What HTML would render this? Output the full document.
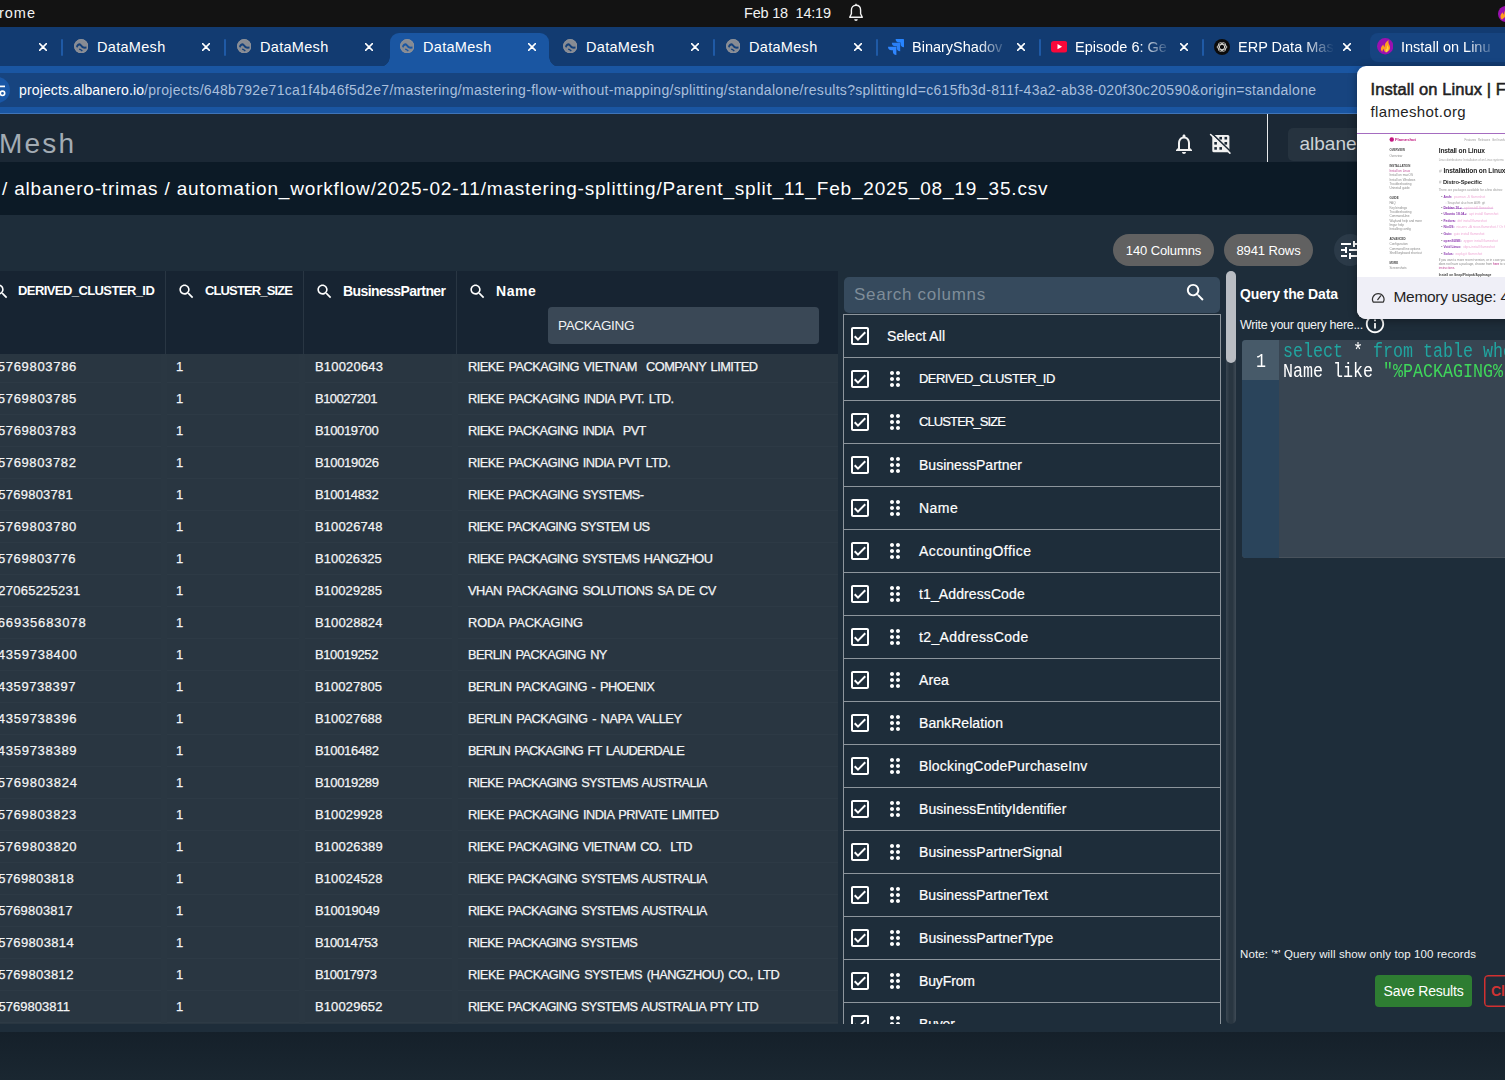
<!DOCTYPE html>
<html lang="en"><head><meta charset="utf-8"><title>DataMesh</title>
<style>
*{box-sizing:border-box}
html,body{margin:0;padding:0}
body{width:1505px;height:1080px;overflow:hidden;position:relative;background:#1e2d3a;font-family:"Liberation Sans",sans-serif;color:#fff}
.abs,.ic{position:absolute}
.ic{display:block}
span{white-space:nowrap}
/* system bar */
#sys{position:absolute;left:0;top:0;width:1505px;height:27px;background:#131313}
#sys span{position:absolute;top:3.700px;font-size:14.500px;line-height:19px;color:#f2f2f2}
/* tab strip */
#tabs{position:absolute;left:0;top:27px;width:1505px;height:40px;background:#123b71}
#toolbar{position:absolute;left:0;top:66px;width:1505px;height:48px;background:#1a56a2;border-bottom:1px solid #3f74b8}
#omni{position:absolute;left:-20px;top:7px;width:1400px;height:34px;border-radius:17px;background:#17447f}
#omni span{position:absolute;top:7px;font-size:14px;line-height:20px;font-family:"Liberation Sans",sans-serif}
.tab{position:absolute;top:6px;height:34px}
.tab .tt{position:absolute;top:5px;font-size:14.5px;line-height:18px;color:#fff;font-family:"Liberation Sans",sans-serif;overflow:hidden}
.tab .x{position:absolute;top:4px;font-size:15px;line-height:20px;color:#fff;font-family:"DejaVu Sans",sans-serif}
.tsep{position:absolute;top:11.500px;width:2px;height:17px;background:#1f5aa6;border-radius:1px}
#acttab{position:absolute;left:390px;top:6px;width:159px;height:34px;background:#1a56a2;border-radius:9px 9px 0 0}
#acttab:before,#acttab:after{content:"";position:absolute;bottom:0;width:10px;height:10px;background:radial-gradient(circle at 0 0,transparent 9.5px,#1a56a2 10px)}
#acttab:before{left:-10px}
#acttab:after{right:-10px;background:radial-gradient(circle at 100% 0,transparent 9.5px,#1a56a2 10px)}
/* app header */
#apphdr{position:absolute;left:0;top:114px;width:1505px;height:48px;background:#1b2835}
#brand{position:absolute;left:-1px;top:12px;font-size:28px;line-height:36px;color:#a3acb4;font-weight:400}
#hdiv{position:absolute;left:1267px;top:0;width:1px;height:48px;background:#e8eaec}
#proj{position:absolute;left:1288px;top:14px;width:120px;height:33px;border-radius:5px;background:#26333f}
#proj span{position:absolute;left:11.500px;top:4.500px;font-size:19px;line-height:22px;color:#cdd2d7}
#crumb{position:absolute;left:0;top:162px;width:1505px;height:53px;background:#0c1a26}
#crumb span{position:absolute;left:2px;top:15px;font-size:19px;line-height:24px;color:#fff;letter-spacing:0.1px}
#foot{position:absolute;left:0;top:1032px;width:1505px;height:48px;background:linear-gradient(#15202a,#1a2731)}
/* chips */
.chip{position:absolute;top:234px;height:32px;border-radius:16px;background:#616161;color:#fff;font-size:13px;line-height:34px;text-align:center}
#tunebtn{position:absolute;left:1334px;top:234px;width:32px;height:32px;border-radius:16px;background:#2b3a48}
/* table */
#table{position:absolute;left:0;top:271px;width:838px;height:753px;overflow:hidden;background:#293641}
#thead{position:absolute;left:0;top:0;width:838px;height:83px;background:#172432;z-index:2}

.th{position:absolute;top:10px;font-size:14px;line-height:20px;font-weight:bold;color:#fff}
.vsep{position:absolute;top:0;width:1px;height:83px;background:#293643}
.vband{position:absolute;top:83px;width:6px;height:680px;background:#2a3742;z-index:1}
#filter{position:absolute;left:548px;top:36px;width:271px;height:37px;border-radius:4px;background:#3a4856}
#filter span{position:absolute;left:10px;top:9px;font-size:13.5px;line-height:20px;color:#f1f3f4}
.tr{position:absolute;left:0;width:838px;height:32px;border-bottom:1px solid #2d3a45;font-size:13px;line-height:20px;color:#f3f4f5}
.tr span{position:absolute;top:5.500px;z-index:2;-webkit-text-stroke:.250px #f3f4f5}
.c3{font-size:12.800px;word-spacing:1.500px}
.c0{right:759px}
.c1{left:176px}
.c2{left:315px}
.c3{left:468px}
/* col list */
#colsearch{position:absolute;left:844px;top:277px;width:376px;height:35.500px;background:#364a5d;border-radius:5px}
#colsearch span{position:absolute;left:10px;top:7px;font-size:17px;line-height:22px;color:#7f8d99}
#collist{position:absolute;left:843px;top:314px;width:378px;height:710px;overflow:hidden;border-left:1px solid #8d959c;border-right:1px solid #8d959c}
.cl{position:absolute;left:0;width:376px;height:43px;border-top:1px solid #8d959c}
.cn{position:absolute;top:11px;font-size:14px;line-height:20px;color:#fff;-webkit-text-stroke:.200px #fff}
#sbtrack{position:absolute;left:1226px;top:271px;width:10px;height:753px;border-radius:5px;background:linear-gradient(90deg,#3b4752,#293641 35%,#293641 65%,#3f4b56)}
#sbthumb{position:absolute;left:1226px;top:271px;width:10px;height:92px;border-radius:5px;background:#b9bdc3}
/* query */
#qtitle{position:absolute;left:1240px;top:283.500px;font-size:14px;font-weight:bold;line-height:20px}
#qsub{position:absolute;left:1240px;top:316px;font-size:12.5px;line-height:18px;color:#f1f3f4}
#editor{position:absolute;left:1242px;top:340px;width:300px;height:218px;box-shadow:inset 0 -1px 0 #48525c;border-radius:4px 0 0 4px;background:#384552;overflow:hidden}
#gutter{position:absolute;left:0;top:0;width:37px;height:218px;background:#2a445b}
#gutact{position:absolute;left:0;top:0;width:37px;height:39.500px;background:#475a69}
#gutter span{position:absolute;left:13.500px;top:11px;font-size:20px;line-height:22px;color:#fff;font-family:"Liberation Mono",monospace;transform:scaleX(.8333);transform-origin:0 0}
.code{position:absolute;left:40.500px;font-size:20px;line-height:20px;transform:scaleX(.8333);transform-origin:0 0;font-family:"Liberation Mono","DejaVu Sans Mono",monospace;color:#fff;white-space:pre}
.kw{color:#20a5a0}.str{color:#3fd75a}
#note{position:absolute;left:1240px;top:945px;font-size:11.5px;line-height:18px;color:#f1f3f4}
#save{position:absolute;left:1375px;top:975px;width:97px;height:32px;border-radius:4px;background:#2e7d32;color:#fff;font-size:14px;line-height:32px;text-align:center}
#close{position:absolute;left:1484px;top:975px;width:80px;height:32px;border-radius:4px;border:1px solid #d33030;box-shadow:inset 0 0 0 .500px #d33030;color:#cf3333;font-size:14px;line-height:30px;font-weight:bold}
#close span{position:absolute;left:6px;top:0}
/* popup */
#popup{position:absolute;left:1357px;top:66px;width:160px;height:253px;border-radius:9px;background:#fff;overflow:hidden;box-shadow:0 2px 8px rgba(0,0,0,.35)}
#popup .t1{position:absolute;left:13.500px;top:11.500px;font-size:16.500px;font-weight:normal;-webkit-text-stroke:.550px #1f1f1f;line-height:22px;color:#1f1f1f}
#popup .t2{position:absolute;left:13.500px;top:36px;font-size:15px;line-height:20px;color:#1f1f1f}
#thumb{position:absolute;left:0;top:67px;width:160px;height:144px;background:#fff;border-top:1px solid #a56cc0;overflow:hidden}
#thumbin{position:absolute;left:0;top:0;width:640px;height:576px;transform:scale(.25);transform-origin:0 0}
#thumbin span{position:absolute;line-height:1.16}
#pfoot{position:absolute;left:0;top:211px;width:160px;height:42px;background:#efeff7}
#pfoot>span{position:absolute;left:36.500px;top:10px;font-size:15.500px;line-height:20px;color:#1f1f1f}

.fade{-webkit-mask-image:linear-gradient(90deg,#000 calc(100% - 30px),transparent 100%);mask-image:linear-gradient(90deg,#000 calc(100% - 30px),transparent 100%)}
#th0,#th1{font-size:13px}
#cn0,#cn1{font-size:13px}

</style></head>
<body>
<div id="sys">
<span id="sys1" style="letter-spacing:0.984px;left:-1px">rome</span>
<span id="sys2" style="letter-spacing:-0.208px;left:744px">Feb 18&nbsp; 14:19</span>
<svg class="ic" style="left:847px;top:3px;width:18px;height:20px" viewBox="0 0 18 20"><path d="M9 2.2c-2.9 0-4.6 2.2-4.600 5v3.600L2.700 14.200h12.600L13.600 10.800V7.200c0-2.800-1.700-5-4.600-5z" fill="none" stroke="#f2f2f2" stroke-width="1.400" stroke-linejoin="round"/><path d="M7.200 16.200a1.800 1.800 0 0 0 3.600 0z" fill="#f2f2f2"/><path d="M9 0.800v1.600" stroke="#f2f2f2" stroke-width="1.400"/></svg>
<svg class="ic" style="left:1498px;top:5.600px;width:16px;height:16px" viewBox="0 0 16 16"><circle cx="8" cy="8" r="8" fill="#9b10b0"/><g transform="translate(8 8) scale(1.350) translate(-8.100 -8.100)"><path d="M5.200 12.200C3.400 10.800 3.600 8.600 5.800 6.800c.1 1 .4 1.500.9 1.800C6.600 6.500 7.500 5 9.600 3.600c-.5 1.800.1 2.800.7 4z" fill="#ff9d1e"/></g></svg>
</div>
<div id="tabs">
<div id="acttab"></div>
<!-- tab 0 -->
<div class="tab" style="left:-101px"><svg class="ic" style="left:140px;top:10px;width:8px;height:8px" viewBox="0 0 8 8"><path d="M.600.600l6.800 6.800M7.400.600L.600 7.400" stroke="#fff" stroke-width="1.500" stroke-linecap="round"/></svg></div>
<div class="tsep" style="left:61px"></div>
<div class="tab" style="left:62px"><svg class="ic" style="left:11.600px;top:6px;width:14.400px;height:14.400px" viewBox="0 0 14.4 14.4"><circle cx="7.2" cy="7.2" r="7.100" fill="#878b93"/><path d="M2 7.300C3.200 5 5.400 3.400 7 5s1.600 3 5.400 2.600l.2 2C9 10.200 7.600 8.800 6.500 7.200S4.200 6.600 3.200 9z" fill="#14407a"/><path d="M5.400 9.600c1.200.2 2.200 1 3.400 2l-1 1c-1-1-1.800-1.600-2.800-1.800z" fill="#14407a"/><circle cx="7.2" cy="7.2" r="6.600" fill="none" stroke="#8d919a" stroke-width="1"/></svg><span class="tt" id="tt1" style="letter-spacing:0.301px;left:35px">DataMesh</span><svg class="ic" style="left:140px;top:10px;width:8px;height:8px" viewBox="0 0 8 8"><path d="M.600.600l6.800 6.800M7.400.600L.600 7.400" stroke="#fff" stroke-width="1.500" stroke-linecap="round"/></svg></div>
<div class="tsep" style="left:224px"></div>
<div class="tab" style="left:225px"><svg class="ic" style="left:11.600px;top:6px;width:14.400px;height:14.400px" viewBox="0 0 14.4 14.4"><circle cx="7.2" cy="7.2" r="7.100" fill="#878b93"/><path d="M2 7.300C3.200 5 5.400 3.400 7 5s1.600 3 5.400 2.600l.2 2C9 10.200 7.600 8.800 6.500 7.200S4.200 6.600 3.200 9z" fill="#14407a"/><path d="M5.400 9.600c1.200.2 2.200 1 3.400 2l-1 1c-1-1-1.800-1.600-2.800-1.800z" fill="#14407a"/><circle cx="7.2" cy="7.2" r="6.600" fill="none" stroke="#8d919a" stroke-width="1"/></svg><span class="tt" id="tt2" style="letter-spacing:0.301px;left:35px">DataMesh</span><svg class="ic" style="left:140px;top:10px;width:8px;height:8px" viewBox="0 0 8 8"><path d="M.600.600l6.800 6.800M7.400.600L.600 7.400" stroke="#fff" stroke-width="1.500" stroke-linecap="round"/></svg></div>
<div class="tab" style="left:388px"><svg class="ic" style="left:11.600px;top:6px;width:14.400px;height:14.400px" viewBox="0 0 14.4 14.4"><circle cx="7.2" cy="7.2" r="7.100" fill="#878b93"/><path d="M2 7.300C3.200 5 5.400 3.400 7 5s1.600 3 5.400 2.600l.2 2C9 10.200 7.600 8.800 6.500 7.200S4.200 6.600 3.200 9z" fill="#1a56a2"/><path d="M5.400 9.600c1.200.2 2.200 1 3.400 2l-1 1c-1-1-1.800-1.600-2.800-1.800z" fill="#1a56a2"/><circle cx="7.2" cy="7.2" r="6.600" fill="none" stroke="#8d919a" stroke-width="1"/></svg><span class="tt" id="tt3" style="letter-spacing:0.301px;left:35px">DataMesh</span><svg class="ic" style="left:140px;top:10px;width:8px;height:8px" viewBox="0 0 8 8"><path d="M.600.600l6.800 6.800M7.400.600L.600 7.400" stroke="#fff" stroke-width="1.500" stroke-linecap="round"/></svg></div>
<div class="tab" style="left:551px"><svg class="ic" style="left:11.600px;top:6px;width:14.400px;height:14.400px" viewBox="0 0 14.4 14.4"><circle cx="7.2" cy="7.2" r="7.100" fill="#878b93"/><path d="M2 7.300C3.200 5 5.400 3.400 7 5s1.600 3 5.400 2.600l.2 2C9 10.200 7.600 8.800 6.500 7.200S4.200 6.600 3.200 9z" fill="#14407a"/><path d="M5.400 9.600c1.200.2 2.200 1 3.400 2l-1 1c-1-1-1.800-1.600-2.800-1.800z" fill="#14407a"/><circle cx="7.2" cy="7.2" r="6.600" fill="none" stroke="#8d919a" stroke-width="1"/></svg><span class="tt" id="tt4" style="letter-spacing:0.301px;left:35px">DataMesh</span><svg class="ic" style="left:140px;top:10px;width:8px;height:8px" viewBox="0 0 8 8"><path d="M.600.600l6.800 6.800M7.400.600L.600 7.400" stroke="#fff" stroke-width="1.500" stroke-linecap="round"/></svg></div>
<div class="tsep" style="left:713px"></div>
<div class="tab" style="left:714px"><svg class="ic" style="left:11.600px;top:6px;width:14.400px;height:14.400px" viewBox="0 0 14.4 14.4"><circle cx="7.2" cy="7.2" r="7.100" fill="#878b93"/><path d="M2 7.300C3.200 5 5.400 3.400 7 5s1.600 3 5.400 2.600l.2 2C9 10.200 7.600 8.800 6.500 7.200S4.200 6.600 3.200 9z" fill="#14407a"/><path d="M5.400 9.600c1.200.2 2.200 1 3.400 2l-1 1c-1-1-1.800-1.600-2.800-1.800z" fill="#14407a"/><circle cx="7.2" cy="7.2" r="6.600" fill="none" stroke="#8d919a" stroke-width="1"/></svg><span class="tt" id="tt5" style="letter-spacing:0.301px;left:35px">DataMesh</span><svg class="ic" style="left:140px;top:10px;width:8px;height:8px" viewBox="0 0 8 8"><path d="M.600.600l6.800 6.800M7.400.600L.600 7.400" stroke="#fff" stroke-width="1.500" stroke-linecap="round"/></svg></div>
<div class="tsep" style="left:876px"></div>
<div class="tab" style="left:877px"><svg class="ic" style="left:11px;top:5.500px;width:16px;height:16px" viewBox="0 0 24 24"><path fill="#2684ff" d="M23.013 0H11.455a5.215 5.215 0 0 0 5.215 5.215h2.129v2.057A5.215 5.215 0 0 0 24 12.483V1.005A1.001 1.001 0 0 0 23.013 0Z"/><path fill="#2a7ff5" d="M17.294 5.757H5.736a5.215 5.215 0 0 0 5.215 5.214h2.129v2.058a5.218 5.218 0 0 0 5.215 5.214V6.758a1.001 1.001 0 0 0-1.001-1.001z"/><path fill="#2f86ff" d="M11.571 11.513H0a5.218 5.218 0 0 0 5.232 5.215h2.130v2.057A5.215 5.215 0 0 0 12.575 24V12.518a1.005 1.005 0 0 0-1.004-1.005z"/></svg><span class="tt fade" style="left:35px;width:96px">BinaryShadov</span><svg class="ic" style="left:140px;top:10px;width:8px;height:8px" viewBox="0 0 8 8"><path d="M.600.600l6.800 6.800M7.400.600L.600 7.400" stroke="#fff" stroke-width="1.500" stroke-linecap="round"/></svg></div>
<div class="tsep" style="left:1039px"></div>
<div class="tab" style="left:1040px"><svg class="ic" style="left:10.800px;top:8.200px;width:16.400px;height:11.400px" viewBox="0 0 16.4 11.4"><rect x="0" y="0" width="16.400" height="11.400" rx="3" fill="#f8083a"/><path d="M6.500 3.100v5.200l4.600-2.600z" fill="#fff"/></svg><span class="tt fade" style="left:35px;width:96px">Episode 6: Ge</span><svg class="ic" style="left:140px;top:10px;width:8px;height:8px" viewBox="0 0 8 8"><path d="M.600.600l6.800 6.800M7.400.600L.600 7.400" stroke="#fff" stroke-width="1.500" stroke-linecap="round"/></svg></div>
<div class="tsep" style="left:1202px"></div>
<div class="tab" style="left:1203px"><svg class="ic" style="left:11px;top:6px;width:16px;height:16px" viewBox="0 0 16 16"><circle cx="8" cy="8" r="8" fill="#0b0b0b"/><g fill="none" stroke="#e9e6e0" stroke-width=".800"><ellipse cx="8" cy="8" rx="4.800" ry="2.500"/><ellipse cx="8" cy="8" rx="4.800" ry="2.500" transform="rotate(60 8 8)"/><ellipse cx="8" cy="8" rx="4.800" ry="2.500" transform="rotate(120 8 8)"/></g></svg><span class="tt fade" style="left:35px;width:96px">ERP Data Mas</span><svg class="ic" style="left:140px;top:10px;width:8px;height:8px" viewBox="0 0 8 8"><path d="M.600.600l6.800 6.800M7.400.600L.600 7.400" stroke="#fff" stroke-width="1.500" stroke-linecap="round"/></svg></div>
<div class="abs" style="left:1369.500px;top:6px;width:160px;height:28.600px;border-radius:8px;background:#164480"></div>
<div class="tab" style="left:1366px"><svg class="ic" style="left:11px;top:5.400px;width:16.400px;height:16.400px" viewBox="0 0 16 16"><circle cx="8" cy="8" r="8" fill="#9b10b0"/><g transform="translate(8 8) scale(1.350) translate(-8.100 -8.100)"><path d="M6.200 12.200C4.400 10.800 4.600 8.600 6.800 6.800c.1 1 .4 1.500.9 1.800C7.600 6.500 8.500 5 10.600 3.600c-.5 1.800.1 2.800.7 4 .6 1.300.5 3.300-1.300 4.400.5-1 .3-2-.5-2.800-.3 1.300-1.200 1.500-1.600 3-.6-.6-.8-1.300-.7-2.200-.8.700-1.200 1.500-1 2.200z" fill="#ff9d1e"/><path d="M8.300 12.400c-.5-1.200.2-2 1-2.800.2-.8.200-1.500 0-2.300 1.300 1.300 2 3.300.2 5.100z" fill="#ffd83b"/></g></svg><span class="tt fade" style="left:35px;width:96px">Install on Linu</span></div>
</div>
<div id="toolbar">
<div id="omni">
<div class="abs" style="left:4px;top:4px;width:26px;height:26px;border-radius:13px;background:#1a57a6"></div><svg class="ic" style="left:14px;top:9px;width:16px;height:16px" viewBox="0 0 16 16"><path d="M0 4.400h11" stroke="#fff" stroke-width="1.700"/><circle cx="8.500" cy="11.300" r="2.200" fill="none" stroke="#fff" stroke-width="1.600"/><path d="M0 11.300h6" stroke="#fff" stroke-width="1.700"/></svg>
<span id="u1" style="letter-spacing:0.148px;left:39px;color:#fff">projects.albanero.io</span><span id="u2" style="letter-spacing:0.303px;left:164px;color:#a9bfdc">/projects/648b792e71ca1f4b46f5d2e7/mastering/mastering-flow-without-mapping/splitting/standalone/results?splittingId=c615fb3d-811f-43a2-ab38-020f30c20590&amp;origin=standalone</span>
</div>
</div>
<div id="apphdr">
<span id="brand" style="letter-spacing:2.177px">Mesh</span>
<svg class="ic" style="left:1171.8px;top:17.700px;width:24px;height:24px;" viewBox="0 0 24 24"><path fill="#f1f1f1" d="M12 22c1.1 0 2-.9 2-2h-4c0 1.1.9 2 2 2zm6-6v-5c0-3.07-1.63-5.64-4.5-6.32V4c0-.83-.67-1.5-1.5-1.5s-1.5.67-1.5 1.5v.68C7.64 5.36 6 7.92 6 11v5l-2 2v1h16v-1l-2-2zm-2 1H8v-6c0-2.48 1.51-4.5 4-4.5s4 2.02 4 4.5v6z"/></svg>
<svg class="ic" style="left:1209px;top:19px;width:23px;height:22px" viewBox="1209 133 23 22"><rect x="1212.300" y="135" width="17.100" height="17.300" rx="1.600" fill="#f1f1f1"/><rect x="1219.4" y="136.9" width="2.600" height="2.600" fill="#1b2835"/><rect x="1224.5" y="136.9" width="2.600" height="2.600" fill="#1b2835"/><rect x="1214.3" y="142.0" width="2.600" height="2.600" fill="#1b2835"/><rect x="1224.5" y="142.0" width="2.600" height="2.600" fill="#1b2835"/><rect x="1214.3" y="147.1" width="2.600" height="2.600" fill="#1b2835"/><rect x="1219.4" y="147.1" width="2.600" height="2.600" fill="#1b2835"/><path d="M1211.600 133.200L1231.100 152" stroke="#1b2835" stroke-width="1.700"/><path d="M1210.600 134.500L1229.900 153.100" stroke="#f1f1f1" stroke-width="1.600" stroke-linecap="round"/></svg>
<div id="hdiv"></div>
<div id="proj"><span>albanero</span></div>
</div>
<div id="crumb"><span id="crumbt" style="letter-spacing:0.815px">/ albanero-trimas / automation_workflow/2025-02-11/mastering-splitting/Parent_split_11_Feb_2025_08_19_35.csv</span></div>
<div id="foot"></div>
<div class="chip" style="left:1113px;width:101px"><span id="chip1" style="letter-spacing:-0.111px">140 Columns</span></div>
<div class="chip" style="left:1224px;width:89px"><span id="chip2" style="letter-spacing:-0.106px">8941 Rows</span></div>
<div id="tunebtn"><svg class="ic" style="left:4px;top:4px;width:24px;height:24px;" viewBox="0 0 24 24"><path fill="#fff" d="M3 17v2h6v-2H3zM3 5v2h10V5H3zm10 16v-2h8v-2h-8v-2h-2v6h2zM7 9v2H3v2h4v2h2V9H7zm14 4v-2H11v2h10zm-6-4h2V7h4V5h-4V3h-2v6z"/></svg></div>
<div id="table">
<div id="thead">
<svg class="ic" style="left:-9px;top:11px;width:19px;height:19px;" viewBox="0 0 24 24"><path fill="#fff" d="M15.5 14h-.79l-.28-.27C15.41 12.59 16 11.11 16 9.5 16 5.91 13.09 3 9.5 3S3 5.91 3 9.5 5.91 16 9.5 16c1.61 0 3.09-.59 4.23-1.57l.27.28v.79l5 4.99L20.49 19l-4.99-5zm-6 0C7.01 14 5 11.99 5 9.5S7.01 5 9.5 5 14 7.01 14 9.5 11.99 14 9.5 14z"/></svg>
<span class="th" id="th0" style="letter-spacing:-0.579px;left:18px">DERIVED_CLUSTER_ID</span>
<svg class="ic" style="left:177px;top:11px;width:19px;height:19px;" viewBox="0 0 24 24"><path fill="#fff" d="M15.5 14h-.79l-.28-.27C15.41 12.59 16 11.11 16 9.5 16 5.91 13.09 3 9.5 3S3 5.91 3 9.5 5.91 16 9.5 16c1.61 0 3.09-.59 4.23-1.57l.27.28v.79l5 4.99L20.49 19l-4.99-5zm-6 0C7.01 14 5 11.99 5 9.5S7.01 5 9.5 5 14 7.01 14 9.5 11.99 14 9.5 14z"/></svg>
<span class="th" id="th1" style="letter-spacing:-0.865px;left:205px">CLUSTER_SIZE</span>
<svg class="ic" style="left:315px;top:11px;width:19px;height:19px;" viewBox="0 0 24 24"><path fill="#fff" d="M15.5 14h-.79l-.28-.27C15.41 12.59 16 11.11 16 9.5 16 5.91 13.09 3 9.5 3S3 5.91 3 9.5 5.91 16 9.5 16c1.61 0 3.09-.59 4.23-1.57l.27.28v.79l5 4.99L20.49 19l-4.99-5zm-6 0C7.01 14 5 11.99 5 9.5S7.01 5 9.5 5 14 7.01 14 9.5 11.99 14 9.5 14z"/></svg>
<span class="th" id="th2" style="letter-spacing:-0.592px;left:343px">BusinessPartner</span>
<svg class="ic" style="left:468px;top:11px;width:19px;height:19px;" viewBox="0 0 24 24"><path fill="#fff" d="M15.5 14h-.79l-.28-.27C15.41 12.59 16 11.11 16 9.5 16 5.91 13.09 3 9.5 3S3 5.91 3 9.5 5.91 16 9.5 16c1.61 0 3.09-.59 4.23-1.57l.27.28v.79l5 4.99L20.49 19l-4.99-5zm-6 0C7.01 14 5 11.99 5 9.5S7.01 5 9.5 5 14 7.01 14 9.5 11.99 14 9.5 14z"/></svg>
<span class="th" id="th3" style="letter-spacing:0.52px;left:496px">Name</span>
<div class="vsep" style="left:165px"></div><div class="vsep" style="left:303px"></div><div class="vsep" style="left:456px"></div>
<div id="filter"><span id="ftxt" style="letter-spacing:-0.36px">PACKAGING</span></div>
</div>
<div class="vband" style="left:161px"></div><div class="vband" style="left:299px"></div><div class="vband" style="left:452px"></div>
<div class="tr" style="top:80px"><span class="c0" id="a0" style="letter-spacing:0.682px;right:761.0px">25769803786</span><span class="c1">1</span><span class="c2" id="b0" style="letter-spacing:0.186px">B10020643</span><span class="c3" id="n0" style="letter-spacing:-0.505px">RIEKE PACKAGING VIETNAM&nbsp; COMPANY LIMITED</span></div>
<div class="tr" style="top:112px"><span class="c0" id="a1" style="letter-spacing:0.682px;right:761.0px">25769803785</span><span class="c1">1</span><span class="c2" id="b1" style="letter-spacing:-0.514px">B10027201</span><span class="c3" id="n1" style="letter-spacing:-0.5px">RIEKE PACKAGING INDIA PVT. LTD.</span></div>
<div class="tr" style="top:144px"><span class="c0" id="a2" style="letter-spacing:0.627px;right:761.5px">25769803783</span><span class="c1">1</span><span class="c2" id="b2" style="letter-spacing:-0.352px">B10019700</span><span class="c3" id="n2" style="letter-spacing:-0.575px">RIEKE PACKAGING INDIA&nbsp; PVT</span></div>
<div class="tr" style="top:176px"><span class="c0" id="a3" style="letter-spacing:0.627px;right:761.5px">25769803782</span><span class="c1">1</span><span class="c2" id="b3" style="letter-spacing:-0.314px">B10019026</span><span class="c3" id="n3" style="letter-spacing:-0.549px">RIEKE PACKAGING INDIA PVT LTD.</span></div>
<div class="tr" style="top:208px"><span class="c0" id="a4" style="letter-spacing:0.242px;right:765.0px">25769803781</span><span class="c1">1</span><span class="c2" id="b4" style="letter-spacing:-0.352px">B10014832</span><span class="c3" id="n4" style="letter-spacing:-0.569px">RIEKE PACKAGING SYSTEMS-</span></div>
<div class="tr" style="top:240px"><span class="c0" id="a5" style="letter-spacing:0.682px;right:761.0px">25769803780</span><span class="c1">1</span><span class="c2" id="b5" style="letter-spacing:0.111px">B10026748</span><span class="c3" id="n5" style="letter-spacing:-0.713px">RIEKE PACKAGING SYSTEM US</span></div>
<div class="tr" style="top:272px"><span class="c0" id="a6" style="letter-spacing:0.572px;right:762.0px">25769803776</span><span class="c1">1</span><span class="c2" id="b6" style="letter-spacing:0.023px">B10026325</span><span class="c3" id="n6" style="letter-spacing:-0.584px">RIEKE PACKAGING SYSTEMS HANGZHOU</span></div>
<div class="tr" style="top:304px"><span class="c0" id="a7" style="letter-spacing:0.244px;right:757.5px">127065225231</span><span class="c1">1</span><span class="c2" id="b7" style="letter-spacing:0.061px">B10029285</span><span class="c3" id="n7" style="letter-spacing:-0.42px">VHAN PACKAGING SOLUTIONS SA DE CV</span></div>
<div class="tr" style="top:336px"><span class="c0" id="a8" style="letter-spacing:0.839px;right:751.5px">166935683078</span><span class="c1">1</span><span class="c2" id="b8" style="letter-spacing:0.111px">B10028824</span><span class="c3" id="n8" style="letter-spacing:-0.113px">RODA PACKAGING</span></div>
<div class="tr" style="top:368px"><span class="c0" id="a9" style="letter-spacing:0.737px;right:760.5px">34359738400</span><span class="c1">1</span><span class="c2" id="b9" style="letter-spacing:-0.389px">B10019252</span><span class="c3" id="n9" style="letter-spacing:-0.548px">BERLIN PACKAGING NY</span></div>
<div class="tr" style="top:400px"><span class="c0" id="a10" style="letter-spacing:0.572px;right:762.0px">34359738397</span><span class="c1">1</span><span class="c2" id="b10" style="letter-spacing:0.061px">B10027805</span><span class="c3" id="n10" style="letter-spacing:-0.468px">BERLIN PACKAGING - PHOENIX</span></div>
<div class="tr" style="top:432px"><span class="c0" id="a11" style="letter-spacing:0.715px;right:760.7px">34359738396</span><span class="c1">1</span><span class="c2" id="b11" style="letter-spacing:0.061px">B10027688</span><span class="c3" id="n11" style="letter-spacing:-0.43px">BERLIN PACKAGING - NAPA VALLEY</span></div>
<div class="tr" style="top:464px"><span class="c0" id="a12" style="letter-spacing:0.715px;right:760.7px">34359738389</span><span class="c1">1</span><span class="c2" id="b12" style="letter-spacing:-0.314px">B10016482</span><span class="c3" id="n12" style="letter-spacing:-0.71px">BERLIN PACKAGING FT LAUDERDALE</span></div>
<div class="tr" style="top:496px"><span class="c0" id="a13" style="letter-spacing:0.759px;right:760.3px">25769803824</span><span class="c1">1</span><span class="c2" id="b13" style="letter-spacing:-0.314px">B10019289</span><span class="c3" id="n13" style="letter-spacing:-0.653px">RIEKE PACKAGING SYSTEMS AUSTRALIA</span></div>
<div class="tr" style="top:528px"><span class="c0" id="a14" style="letter-spacing:0.682px;right:761.0px">25769803823</span><span class="c1">1</span><span class="c2" id="b14" style="letter-spacing:0.111px">B10029928</span><span class="c3" id="n14" style="letter-spacing:-0.543px">RIEKE PACKAGING INDIA PRIVATE LIMITED</span></div>
<div class="tr" style="top:560px"><span class="c0" id="a15" style="letter-spacing:0.715px;right:760.7px">25769803820</span><span class="c1">1</span><span class="c2" id="b15" style="letter-spacing:0.148px">B10026389</span><span class="c3" id="n15" style="letter-spacing:-0.558px">RIEKE PACKAGING VIETNAM CO.&nbsp; LTD</span></div>
<div class="tr" style="top:592px"><span class="c0" id="a16" style="letter-spacing:0.352px;right:764.0px">25769803818</span><span class="c1">1</span><span class="c2" id="b16" style="letter-spacing:0.111px">B10024528</span><span class="c3" id="n16" style="letter-spacing:-0.653px">RIEKE PACKAGING SYSTEMS AUSTRALIA</span></div>
<div class="tr" style="top:624px"><span class="c0" id="a17" style="letter-spacing:0.209px;right:765.3px">25769803817</span><span class="c1">1</span><span class="c2" id="b17" style="letter-spacing:-0.227px">B10019049</span><span class="c3" id="n17" style="letter-spacing:-0.653px">RIEKE PACKAGING SYSTEMS AUSTRALIA</span></div>
<div class="tr" style="top:656px"><span class="c0" id="a18" style="letter-spacing:0.352px;right:764.0px">25769803814</span><span class="c1">1</span><span class="c2" id="b18" style="letter-spacing:-0.439px">B10014753</span><span class="c3" id="n18" style="letter-spacing:-0.687px">RIEKE PACKAGING SYSTEMS</span></div>
<div class="tr" style="top:688px"><span class="c0" id="a19" style="letter-spacing:0.319px;right:764.3px">25769803812</span><span class="c1">1</span><span class="c2" id="b19" style="letter-spacing:-0.564px">B10017973</span><span class="c3" id="n19" style="letter-spacing:-0.466px">RIEKE PACKAGING SYSTEMS (HANGZHOU) CO., LTD</span></div>
<div class="tr" style="top:720px"><span class="c0" id="a20" style="letter-spacing:0.007px;right:768.0px">25769803811</span><span class="c1">1</span><span class="c2" id="b20" style="letter-spacing:0.111px">B10029652</span><span class="c3" id="n20" style="letter-spacing:-0.672px">RIEKE PACKAGING SYSTEMS AUSTRALIA PTY LTD</span></div>
</div>
<div id="colsearch"><span id="stxt" style="letter-spacing:0.716px">Search columns</span><svg class="ic" style="left:339.7px;top:4.4px;width:23px;height:23px;" viewBox="0 0 24 24"><path fill="#fff" d="M15.5 14h-.79l-.28-.27C15.41 12.59 16 11.11 16 9.5 16 5.91 13.09 3 9.5 3S3 5.91 3 9.5 5.91 16 9.5 16c1.61 0 3.09-.59 4.23-1.57l.27.28v.79l5 4.99L20.49 19l-4.99-5zm-6 0C7.01 14 5 11.99 5 9.5S7.01 5 9.5 5 14 7.01 14 9.5 11.99 14 9.5 14z"/></svg></div>
<div id="collist">
<div class="cl" style="top:0px"><svg class="ic" style="left:4px;top:9px;width:24px;height:24px;" viewBox="0 0 24 24"><path fill="#fff" d="M19 3H5c-1.11 0-2 .9-2 2v14c0 1.1.89 2 2 2h14c1.11 0 2-.9 2-2V5c0-1.1-.89-2-2-2zm0 16H5V5h14v14zM17.99 9l-1.41-1.42-6.59 6.59-2.58-2.57-1.42 1.41 4 3.99z"/></svg><span class="cn" id="cnA" style="letter-spacing:0.045px;left:43px">Select All</span></div>
<div class="cl" style="top:43px"><svg class="ic" style="left:4px;top:9px;width:24px;height:24px;" viewBox="0 0 24 24"><path fill="#fff" d="M19 3H5c-1.11 0-2 .9-2 2v14c0 1.1.89 2 2 2h14c1.11 0 2-.9 2-2V5c0-1.1-.89-2-2-2zm0 16H5V5h14v14zM17.99 9l-1.41-1.42-6.59 6.59-2.58-2.57-1.42 1.41 4 3.99z"/></svg><svg class="ic" style="left:39px;top:9px;width:24px;height:24px;" viewBox="0 0 24 24"><path fill="#fff" d="M11 18c0 1.1-.9 2-2 2s-2-.9-2-2 .9-2 2-2 2 .9 2 2zm-2-8c-1.1 0-2 .9-2 2s.9 2 2 2 2-.9 2-2-.9-2-2-2zm0-6c-1.1 0-2 .9-2 2s.9 2 2 2 2-.9 2-2-.9-2-2-2zm6 4c1.1 0 2-.9 2-2s-.9-2-2-2-2 .9-2 2 .9 2 2 2zm0 2c-1.1 0-2 .9-2 2s.9 2 2 2 2-.9 2-2-.9-2-2-2zm0 6c-1.1 0-2 .9-2 2s.9 2 2 2 2-.9 2-2-.9-2-2-2z"/></svg><span class="cn" id="cn0" style="letter-spacing:-0.567px;left:75px">DERIVED_CLUSTER_ID</span></div>
<div class="cl" style="top:86px"><svg class="ic" style="left:4px;top:9px;width:24px;height:24px;" viewBox="0 0 24 24"><path fill="#fff" d="M19 3H5c-1.11 0-2 .9-2 2v14c0 1.1.89 2 2 2h14c1.11 0 2-.9 2-2V5c0-1.1-.89-2-2-2zm0 16H5V5h14v14zM17.99 9l-1.41-1.42-6.59 6.59-2.58-2.57-1.42 1.41 4 3.99z"/></svg><svg class="ic" style="left:39px;top:9px;width:24px;height:24px;" viewBox="0 0 24 24"><path fill="#fff" d="M11 18c0 1.1-.9 2-2 2s-2-.9-2-2 .9-2 2-2 2 .9 2 2zm-2-8c-1.1 0-2 .9-2 2s.9 2 2 2 2-.9 2-2-.9-2-2-2zm0-6c-1.1 0-2 .9-2 2s.9 2 2 2 2-.9 2-2-.9-2-2-2zm6 4c1.1 0 2-.9 2-2s-.9-2-2-2-2 .9-2 2 .9 2 2 2zm0 2c-1.1 0-2 .9-2 2s.9 2 2 2 2-.9 2-2-.9-2-2-2zm0 6c-1.1 0-2 .9-2 2s.9 2 2 2 2-.9 2-2-.9-2-2-2z"/></svg><span class="cn" id="cn1" style="letter-spacing:-0.892px;left:75px">CLUSTER_SIZE</span></div>
<div class="cl" style="top:129px"><svg class="ic" style="left:4px;top:9px;width:24px;height:24px;" viewBox="0 0 24 24"><path fill="#fff" d="M19 3H5c-1.11 0-2 .9-2 2v14c0 1.1.89 2 2 2h14c1.11 0 2-.9 2-2V5c0-1.1-.89-2-2-2zm0 16H5V5h14v14zM17.99 9l-1.41-1.42-6.59 6.59-2.58-2.57-1.42 1.41 4 3.99z"/></svg><svg class="ic" style="left:39px;top:9px;width:24px;height:24px;" viewBox="0 0 24 24"><path fill="#fff" d="M11 18c0 1.1-.9 2-2 2s-2-.9-2-2 .9-2 2-2 2 .9 2 2zm-2-8c-1.1 0-2 .9-2 2s.9 2 2 2 2-.9 2-2-.9-2-2-2zm0-6c-1.1 0-2 .9-2 2s.9 2 2 2 2-.9 2-2-.9-2-2-2zm6 4c1.1 0 2-.9 2-2s-.9-2-2-2-2 .9-2 2 .9 2 2 2zm0 2c-1.1 0-2 .9-2 2s.9 2 2 2 2-.9 2-2-.9-2-2-2zm0 6c-1.1 0-2 .9-2 2s.9 2 2 2 2-.9 2-2-.9-2-2-2z"/></svg><span class="cn" id="cn2" style="letter-spacing:0.02px;left:75px">BusinessPartner</span></div>
<div class="cl" style="top:172px"><svg class="ic" style="left:4px;top:9px;width:24px;height:24px;" viewBox="0 0 24 24"><path fill="#fff" d="M19 3H5c-1.11 0-2 .9-2 2v14c0 1.1.89 2 2 2h14c1.11 0 2-.9 2-2V5c0-1.1-.89-2-2-2zm0 16H5V5h14v14zM17.99 9l-1.41-1.42-6.59 6.59-2.58-2.57-1.42 1.41 4 3.99z"/></svg><svg class="ic" style="left:39px;top:9px;width:24px;height:24px;" viewBox="0 0 24 24"><path fill="#fff" d="M11 18c0 1.1-.9 2-2 2s-2-.9-2-2 .9-2 2-2 2 .9 2 2zm-2-8c-1.1 0-2 .9-2 2s.9 2 2 2 2-.9 2-2-.9-2-2-2zm0-6c-1.1 0-2 .9-2 2s.9 2 2 2 2-.9 2-2-.9-2-2-2zm6 4c1.1 0 2-.9 2-2s-.9-2-2-2-2 .9-2 2 .9 2 2 2zm0 2c-1.1 0-2 .9-2 2s.9 2 2 2 2-.9 2-2-.9-2-2-2zm0 6c-1.1 0-2 .9-2 2s.9 2 2 2 2-.9 2-2-.9-2-2-2z"/></svg><span class="cn" id="cn3" style="letter-spacing:0.48px;left:75px">Name</span></div>
<div class="cl" style="top:215px"><svg class="ic" style="left:4px;top:9px;width:24px;height:24px;" viewBox="0 0 24 24"><path fill="#fff" d="M19 3H5c-1.11 0-2 .9-2 2v14c0 1.1.89 2 2 2h14c1.11 0 2-.9 2-2V5c0-1.1-.89-2-2-2zm0 16H5V5h14v14zM17.99 9l-1.41-1.42-6.59 6.59-2.58-2.57-1.42 1.41 4 3.99z"/></svg><svg class="ic" style="left:39px;top:9px;width:24px;height:24px;" viewBox="0 0 24 24"><path fill="#fff" d="M11 18c0 1.1-.9 2-2 2s-2-.9-2-2 .9-2 2-2 2 .9 2 2zm-2-8c-1.1 0-2 .9-2 2s.9 2 2 2 2-.9 2-2-.9-2-2-2zm0-6c-1.1 0-2 .9-2 2s.9 2 2 2 2-.9 2-2-.9-2-2-2zm6 4c1.1 0 2-.9 2-2s-.9-2-2-2-2 .9-2 2 .9 2 2 2zm0 2c-1.1 0-2 .9-2 2s.9 2 2 2 2-.9 2-2-.9-2-2-2zm0 6c-1.1 0-2 .9-2 2s.9 2 2 2 2-.9 2-2-.9-2-2-2z"/></svg><span class="cn" id="cn4" style="letter-spacing:0.427px;left:75px">AccountingOffice</span></div>
<div class="cl" style="top:258px"><svg class="ic" style="left:4px;top:9px;width:24px;height:24px;" viewBox="0 0 24 24"><path fill="#fff" d="M19 3H5c-1.11 0-2 .9-2 2v14c0 1.1.89 2 2 2h14c1.11 0 2-.9 2-2V5c0-1.1-.89-2-2-2zm0 16H5V5h14v14zM17.99 9l-1.41-1.42-6.59 6.59-2.58-2.57-1.42 1.41 4 3.99z"/></svg><svg class="ic" style="left:39px;top:9px;width:24px;height:24px;" viewBox="0 0 24 24"><path fill="#fff" d="M11 18c0 1.1-.9 2-2 2s-2-.9-2-2 .9-2 2-2 2 .9 2 2zm-2-8c-1.1 0-2 .9-2 2s.9 2 2 2 2-.9 2-2-.9-2-2-2zm0-6c-1.1 0-2 .9-2 2s.9 2 2 2 2-.9 2-2-.9-2-2-2zm6 4c1.1 0 2-.9 2-2s-.9-2-2-2-2 .9-2 2 .9 2 2 2zm0 2c-1.1 0-2 .9-2 2s.9 2 2 2 2-.9 2-2-.9-2-2-2zm0 6c-1.1 0-2 .9-2 2s.9 2 2 2 2-.9 2-2-.9-2-2-2z"/></svg><span class="cn" id="cn5" style="letter-spacing:0.108px;left:75px">t1_AddressCode</span></div>
<div class="cl" style="top:301px"><svg class="ic" style="left:4px;top:9px;width:24px;height:24px;" viewBox="0 0 24 24"><path fill="#fff" d="M19 3H5c-1.11 0-2 .9-2 2v14c0 1.1.89 2 2 2h14c1.11 0 2-.9 2-2V5c0-1.1-.89-2-2-2zm0 16H5V5h14v14zM17.99 9l-1.41-1.42-6.59 6.59-2.58-2.57-1.42 1.41 4 3.99z"/></svg><svg class="ic" style="left:39px;top:9px;width:24px;height:24px;" viewBox="0 0 24 24"><path fill="#fff" d="M11 18c0 1.1-.9 2-2 2s-2-.9-2-2 .9-2 2-2 2 .9 2 2zm-2-8c-1.1 0-2 .9-2 2s.9 2 2 2 2-.9 2-2-.9-2-2-2zm0-6c-1.1 0-2 .9-2 2s.9 2 2 2 2-.9 2-2-.9-2-2-2zm6 4c1.1 0 2-.9 2-2s-.9-2-2-2-2 .9-2 2 .9 2 2 2zm0 2c-1.1 0-2 .9-2 2s.9 2 2 2 2-.9 2-2-.9-2-2-2zm0 6c-1.1 0-2 .9-2 2s.9 2 2 2 2-.9 2-2-.9-2-2-2z"/></svg><span class="cn" id="cn6" style="letter-spacing:0.385px;left:75px">t2_AddressCode</span></div>
<div class="cl" style="top:344px"><svg class="ic" style="left:4px;top:9px;width:24px;height:24px;" viewBox="0 0 24 24"><path fill="#fff" d="M19 3H5c-1.11 0-2 .9-2 2v14c0 1.1.89 2 2 2h14c1.11 0 2-.9 2-2V5c0-1.1-.89-2-2-2zm0 16H5V5h14v14zM17.99 9l-1.41-1.42-6.59 6.59-2.58-2.57-1.42 1.41 4 3.99z"/></svg><svg class="ic" style="left:39px;top:9px;width:24px;height:24px;" viewBox="0 0 24 24"><path fill="#fff" d="M11 18c0 1.1-.9 2-2 2s-2-.9-2-2 .9-2 2-2 2 .9 2 2zm-2-8c-1.1 0-2 .9-2 2s.9 2 2 2 2-.9 2-2-.9-2-2-2zm0-6c-1.1 0-2 .9-2 2s.9 2 2 2 2-.9 2-2-.9-2-2-2zm6 4c1.1 0 2-.9 2-2s-.9-2-2-2-2 .9-2 2 .9 2 2 2zm0 2c-1.1 0-2 .9-2 2s.9 2 2 2 2-.9 2-2-.9-2-2-2zm0 6c-1.1 0-2 .9-2 2s.9 2 2 2 2-.9 2-2-.9-2-2-2z"/></svg><span class="cn" id="cn7" style="letter-spacing:0.107px;left:75px">Area</span></div>
<div class="cl" style="top:387px"><svg class="ic" style="left:4px;top:9px;width:24px;height:24px;" viewBox="0 0 24 24"><path fill="#fff" d="M19 3H5c-1.11 0-2 .9-2 2v14c0 1.1.89 2 2 2h14c1.11 0 2-.9 2-2V5c0-1.1-.89-2-2-2zm0 16H5V5h14v14zM17.99 9l-1.41-1.42-6.59 6.59-2.58-2.57-1.42 1.41 4 3.99z"/></svg><svg class="ic" style="left:39px;top:9px;width:24px;height:24px;" viewBox="0 0 24 24"><path fill="#fff" d="M11 18c0 1.1-.9 2-2 2s-2-.9-2-2 .9-2 2-2 2 .9 2 2zm-2-8c-1.1 0-2 .9-2 2s.9 2 2 2 2-.9 2-2-.9-2-2-2zm0-6c-1.1 0-2 .9-2 2s.9 2 2 2 2-.9 2-2-.9-2-2-2zm6 4c1.1 0 2-.9 2-2s-.9-2-2-2-2 .9-2 2 .9 2 2 2zm0 2c-1.1 0-2 .9-2 2s.9 2 2 2 2-.9 2-2-.9-2-2-2zm0 6c-1.1 0-2 .9-2 2s.9 2 2 2 2-.9 2-2-.9-2-2-2z"/></svg><span class="cn" id="cn8" style="letter-spacing:0.065px;left:75px">BankRelation</span></div>
<div class="cl" style="top:430px"><svg class="ic" style="left:4px;top:9px;width:24px;height:24px;" viewBox="0 0 24 24"><path fill="#fff" d="M19 3H5c-1.11 0-2 .9-2 2v14c0 1.1.89 2 2 2h14c1.11 0 2-.9 2-2V5c0-1.1-.89-2-2-2zm0 16H5V5h14v14zM17.99 9l-1.41-1.42-6.59 6.59-2.58-2.57-1.42 1.41 4 3.99z"/></svg><svg class="ic" style="left:39px;top:9px;width:24px;height:24px;" viewBox="0 0 24 24"><path fill="#fff" d="M11 18c0 1.1-.9 2-2 2s-2-.9-2-2 .9-2 2-2 2 .9 2 2zm-2-8c-1.1 0-2 .9-2 2s.9 2 2 2 2-.9 2-2-.9-2-2-2zm0-6c-1.1 0-2 .9-2 2s.9 2 2 2 2-.9 2-2-.9-2-2-2zm6 4c1.1 0 2-.9 2-2s-.9-2-2-2-2 .9-2 2 .9 2 2 2zm0 2c-1.1 0-2 .9-2 2s.9 2 2 2 2-.9 2-2-.9-2-2-2zm0 6c-1.1 0-2 .9-2 2s.9 2 2 2 2-.9 2-2-.9-2-2-2z"/></svg><span class="cn" id="cn9" style="letter-spacing:0.181px;left:75px">BlockingCodePurchaseInv</span></div>
<div class="cl" style="top:473px"><svg class="ic" style="left:4px;top:9px;width:24px;height:24px;" viewBox="0 0 24 24"><path fill="#fff" d="M19 3H5c-1.11 0-2 .9-2 2v14c0 1.1.89 2 2 2h14c1.11 0 2-.9 2-2V5c0-1.1-.89-2-2-2zm0 16H5V5h14v14zM17.99 9l-1.41-1.42-6.59 6.59-2.58-2.57-1.42 1.41 4 3.99z"/></svg><svg class="ic" style="left:39px;top:9px;width:24px;height:24px;" viewBox="0 0 24 24"><path fill="#fff" d="M11 18c0 1.1-.9 2-2 2s-2-.9-2-2 .9-2 2-2 2 .9 2 2zm-2-8c-1.1 0-2 .9-2 2s.9 2 2 2 2-.9 2-2-.9-2-2-2zm0-6c-1.1 0-2 .9-2 2s.9 2 2 2 2-.9 2-2-.9-2-2-2zm6 4c1.1 0 2-.9 2-2s-.9-2-2-2-2 .9-2 2 .9 2 2 2zm0 2c-1.1 0-2 .9-2 2s.9 2 2 2 2-.9 2-2-.9-2-2-2zm0 6c-1.1 0-2 .9-2 2s.9 2 2 2 2-.9 2-2-.9-2-2-2z"/></svg><span class="cn" id="cn10" style="letter-spacing:0.081px;left:75px">BusinessEntityIdentifier</span></div>
<div class="cl" style="top:516px"><svg class="ic" style="left:4px;top:9px;width:24px;height:24px;" viewBox="0 0 24 24"><path fill="#fff" d="M19 3H5c-1.11 0-2 .9-2 2v14c0 1.1.89 2 2 2h14c1.11 0 2-.9 2-2V5c0-1.1-.89-2-2-2zm0 16H5V5h14v14zM17.99 9l-1.41-1.42-6.59 6.59-2.58-2.57-1.42 1.41 4 3.99z"/></svg><svg class="ic" style="left:39px;top:9px;width:24px;height:24px;" viewBox="0 0 24 24"><path fill="#fff" d="M11 18c0 1.1-.9 2-2 2s-2-.9-2-2 .9-2 2-2 2 .9 2 2zm-2-8c-1.1 0-2 .9-2 2s.9 2 2 2 2-.9 2-2-.9-2-2-2zm0-6c-1.1 0-2 .9-2 2s.9 2 2 2 2-.9 2-2-.9-2-2-2zm6 4c1.1 0 2-.9 2-2s-.9-2-2-2-2 .9-2 2 .9 2 2 2zm0 2c-1.1 0-2 .9-2 2s.9 2 2 2 2-.9 2-2-.9-2-2-2zm0 6c-1.1 0-2 .9-2 2s.9 2 2 2 2-.9 2-2-.9-2-2-2z"/></svg><span class="cn" id="cn11" style="letter-spacing:0.058px;left:75px">BusinessPartnerSignal</span></div>
<div class="cl" style="top:559px"><svg class="ic" style="left:4px;top:9px;width:24px;height:24px;" viewBox="0 0 24 24"><path fill="#fff" d="M19 3H5c-1.11 0-2 .9-2 2v14c0 1.1.89 2 2 2h14c1.11 0 2-.9 2-2V5c0-1.1-.89-2-2-2zm0 16H5V5h14v14zM17.99 9l-1.41-1.42-6.59 6.59-2.58-2.57-1.42 1.41 4 3.99z"/></svg><svg class="ic" style="left:39px;top:9px;width:24px;height:24px;" viewBox="0 0 24 24"><path fill="#fff" d="M11 18c0 1.1-.9 2-2 2s-2-.9-2-2 .9-2 2-2 2 .9 2 2zm-2-8c-1.1 0-2 .9-2 2s.9 2 2 2 2-.9 2-2-.9-2-2-2zm0-6c-1.1 0-2 .9-2 2s.9 2 2 2 2-.9 2-2-.9-2-2-2zm6 4c1.1 0 2-.9 2-2s-.9-2-2-2-2 .9-2 2 .9 2 2 2zm0 2c-1.1 0-2 .9-2 2s.9 2 2 2 2-.9 2-2-.9-2-2-2zm0 6c-1.1 0-2 .9-2 2s.9 2 2 2 2-.9 2-2-.9-2-2-2z"/></svg><span class="cn" id="cn12" style="letter-spacing:0.022px;left:75px">BusinessPartnerText</span></div>
<div class="cl" style="top:602px"><svg class="ic" style="left:4px;top:9px;width:24px;height:24px;" viewBox="0 0 24 24"><path fill="#fff" d="M19 3H5c-1.11 0-2 .9-2 2v14c0 1.1.89 2 2 2h14c1.11 0 2-.9 2-2V5c0-1.1-.89-2-2-2zm0 16H5V5h14v14zM17.99 9l-1.41-1.42-6.59 6.59-2.58-2.57-1.42 1.41 4 3.99z"/></svg><svg class="ic" style="left:39px;top:9px;width:24px;height:24px;" viewBox="0 0 24 24"><path fill="#fff" d="M11 18c0 1.1-.9 2-2 2s-2-.9-2-2 .9-2 2-2 2 .9 2 2zm-2-8c-1.1 0-2 .9-2 2s.9 2 2 2 2-.9 2-2-.9-2-2-2zm0-6c-1.1 0-2 .9-2 2s.9 2 2 2 2-.9 2-2-.9-2-2-2zm6 4c1.1 0 2-.9 2-2s-.9-2-2-2-2 .9-2 2 .9 2 2 2zm0 2c-1.1 0-2 .9-2 2s.9 2 2 2 2-.9 2-2-.9-2-2-2zm0 6c-1.1 0-2 .9-2 2s.9 2 2 2 2-.9 2-2-.9-2-2-2z"/></svg><span class="cn" id="cn13" style="letter-spacing:0.062px;left:75px">BusinessPartnerType</span></div>
<div class="cl" style="top:645px"><svg class="ic" style="left:4px;top:9px;width:24px;height:24px;" viewBox="0 0 24 24"><path fill="#fff" d="M19 3H5c-1.11 0-2 .9-2 2v14c0 1.1.89 2 2 2h14c1.11 0 2-.9 2-2V5c0-1.1-.89-2-2-2zm0 16H5V5h14v14zM17.99 9l-1.41-1.42-6.59 6.59-2.58-2.57-1.42 1.41 4 3.99z"/></svg><svg class="ic" style="left:39px;top:9px;width:24px;height:24px;" viewBox="0 0 24 24"><path fill="#fff" d="M11 18c0 1.1-.9 2-2 2s-2-.9-2-2 .9-2 2-2 2 .9 2 2zm-2-8c-1.1 0-2 .9-2 2s.9 2 2 2 2-.9 2-2-.9-2-2-2zm0-6c-1.1 0-2 .9-2 2s.9 2 2 2 2-.9 2-2-.9-2-2-2zm6 4c1.1 0 2-.9 2-2s-.9-2-2-2-2 .9-2 2 .9 2 2 2zm0 2c-1.1 0-2 .9-2 2s.9 2 2 2 2-.9 2-2-.9-2-2-2zm0 6c-1.1 0-2 .9-2 2s.9 2 2 2 2-.9 2-2-.9-2-2-2z"/></svg><span class="cn" id="cn14" style="letter-spacing:-0.133px;left:75px">BuyFrom</span></div>
<div class="cl" style="top:688px"><svg class="ic" style="left:4px;top:9px;width:24px;height:24px;" viewBox="0 0 24 24"><path fill="#fff" d="M19 3H5c-1.11 0-2 .9-2 2v14c0 1.1.89 2 2 2h14c1.11 0 2-.9 2-2V5c0-1.1-.89-2-2-2zm0 16H5V5h14v14zM17.99 9l-1.41-1.42-6.59 6.59-2.58-2.57-1.42 1.41 4 3.99z"/></svg><svg class="ic" style="left:39px;top:9px;width:24px;height:24px;" viewBox="0 0 24 24"><path fill="#fff" d="M11 18c0 1.1-.9 2-2 2s-2-.9-2-2 .9-2 2-2 2 .9 2 2zm-2-8c-1.1 0-2 .9-2 2s.9 2 2 2 2-.9 2-2-.9-2-2-2zm0-6c-1.1 0-2 .9-2 2s.9 2 2 2 2-.9 2-2-.9-2-2-2zm6 4c1.1 0 2-.9 2-2s-.9-2-2-2-2 .9-2 2 .9 2 2 2zm0 2c-1.1 0-2 .9-2 2s.9 2 2 2 2-.9 2-2-.9-2-2-2zm0 6c-1.1 0-2 .9-2 2s.9 2 2 2 2-.9 2-2-.9-2-2-2z"/></svg><span class="cn" id="cn15" style="letter-spacing:-0.195px;left:75px">Buyer</span></div>
</div>
<div id="sbtrack"></div><div id="sbthumb"></div>
<span id="qtitle" style="letter-spacing:-0.123px">Query the Data</span>
<span id="qsub" style="letter-spacing:-0.313px">Write your query here...</span>
<svg class="ic" style="left:1363.600px;top:313px;width:22px;height:22px;" viewBox="0 0 24 24"><path fill="#fff" d="M11 7h2v2h-2zm0 4h2v6h-2zm1-9C6.48 2 2 6.48 2 12s4.48 10 10 10 10-4.48 10-10S17.52 2 12 2zm0 18c-4.41 0-8-3.59-8-8s3.59-8 8-8 8 3.59 8 8-3.59 8-8 8z"/></svg>
<div id="editor"><div id="gutter"><div id="gutact"></div><span>1</span></div>
<span class="code" style="top:2px"><span class="kw">select</span> * <span class="kw">from</span> <span class="kw">table</span> <span class="kw">where</span></span>
<span class="code" style="top:22px">Name like <span class="str">"%PACKAGING%"</span></span>
</div>
<span id="note" style="letter-spacing:0.118px">Note: '*' Query will show only top 100 records</span>
<div id="save"><span id="savet" style="letter-spacing:-0.208px">Save Results</span></div>
<div id="close"><span>Close</span></div>
<div id="popup">
<span class="t1"><span id="pt1" style="letter-spacing:0.091px">Install on Linux |</span> Flameshot</span>
<span class="t2" id="pt2" style="letter-spacing:0.359px">flameshot.org</span>
<div id="thumb"><div id="thumbin">
<div class="abs" style="left:130.4px;top:12.8px;width:18px;height:18px;border-radius:9px;background:#c2187f"></div>
<span style="left:152px;top:12.3px;font-size:16.8px;color:#c2187f;font-weight:bold;">Flameshot</span>
<span style="left:430.0px;top:15.3px;font-size:11.6px;color:#999;">Features</span>
<span style="left:484px;top:15.3px;font-size:11.6px;color:#999;">Releases</span>
<span style="left:540px;top:15.3px;font-size:11.6px;color:#999;">Get Involved</span>
<span style="left:129.6px;top:58.1px;font-size:11.6px;color:#444;font-weight:bold;">OVERVIEW</span>
<span style="left:129.6px;top:79.6px;font-size:12.4px;color:#8a8a8a;">Overview</span>
<span style="left:129.6px;top:118.5px;font-size:11.6px;color:#444;font-weight:bold;">INSTALLATION</span>
<span style="left:129.6px;top:140.0px;font-size:12.4px;color:#c04b98;">Install on Linux</span>
<span style="left:129.6px;top:158.4px;font-size:12.4px;color:#8a8a8a;">Install on macOS</span>
<span style="left:129.6px;top:176.0px;font-size:12.4px;color:#8a8a8a;">Install on Windows</span>
<span style="left:129.6px;top:192.4px;font-size:12.4px;color:#8a8a8a;">Troubleshooting</span>
<span style="left:129.6px;top:208.8px;font-size:12.4px;color:#8a8a8a;">Uninstall guide</span>
<span style="left:129.6px;top:249.3px;font-size:11.6px;color:#444;font-weight:bold;">GUIDE</span>
<span style="left:129.6px;top:269.6px;font-size:12.4px;color:#8a8a8a;">FAQ</span>
<span style="left:129.6px;top:288.0px;font-size:12.4px;color:#8a8a8a;">Key bindings</span>
<span style="left:129.6px;top:304.4px;font-size:12.4px;color:#8a8a8a;">Troubleshooting</span>
<span style="left:129.6px;top:322.0px;font-size:12.4px;color:#8a8a8a;">Command-line</span>
<span style="left:129.6px;top:339.6px;font-size:12.4px;color:#8a8a8a;">Wayland help and more</span>
<span style="left:129.6px;top:356.8px;font-size:12.4px;color:#8a8a8a;">Imgur help</span>
<span style="left:129.6px;top:374.0px;font-size:12.4px;color:#8a8a8a;">Installing config</span>
<span style="left:129.6px;top:412.5px;font-size:11.6px;color:#444;font-weight:bold;">ADVANCED</span>
<span style="left:129.6px;top:434.4px;font-size:12.4px;color:#8a8a8a;">Configuration</span>
<span style="left:129.6px;top:452.0px;font-size:12.4px;color:#8a8a8a;">Command line options</span>
<span style="left:129.6px;top:468.8px;font-size:12.4px;color:#8a8a8a;">Shell/keyboard shortcut</span>
<span style="left:129.6px;top:508.5px;font-size:11.6px;color:#444;font-weight:bold;">MORE</span>
<span style="left:129.6px;top:528.8px;font-size:12.4px;color:#8a8a8a;">Screenshots</span>
<span style="left:326.8px;top:53.4px;font-size:26.5px;color:#262626;font-weight:bold;letter-spacing:-0.6px;">Install on Linux</span>
<span style="left:326.8px;top:97.3px;font-size:11.6px;color:#a5a5a5;">Linux distributions: Installation of on Linux systems</span>
<span style="left:328px;top:136.4px;font-size:20.0px;color:#bbb;">#</span>
<span style="left:346.4px;top:132.5px;font-size:26.5px;color:#262626;font-weight:bold;letter-spacing:-0.5px">Installation on Linux</span>
<span style="left:328px;top:181.6px;font-size:18.0px;color:#bbb;">#</span>
<span style="left:344px;top:178.5px;font-size:23px;color:#262626;font-weight:bold;letter-spacing:-0.5px">Distro-Specific</span>
<span style="left:326.8px;top:216.4px;font-size:12.4px;color:#999;">There are packages available for a few distros:</span>
<span style="left:336.8px;top:243.9px;font-size:13.2px;color:#666;">•</span>
<span style="left:346.4px;top:243.9px;font-size:13.2px;color:#8a35ad;font-weight:bold;">Arch: <i style="font-style:normal;font-weight:normal;color:#efaad6">&nbsp;pacman -S flameshot</i></span>
<span style="left:336.8px;top:285.9px;font-size:13.2px;color:#666;">•</span>
<span style="left:346.4px;top:285.9px;font-size:13.2px;color:#8a35ad;font-weight:bold;text-decoration:underline;">Debian 10+: <i style="font-style:normal;font-weight:normal;color:#efaad6">&nbsp;apt install flameshot</i></span>
<span style="left:336.8px;top:312.3px;font-size:13.2px;color:#666;">•</span>
<span style="left:346.4px;top:312.3px;font-size:13.2px;color:#8a35ad;font-weight:bold;">Ubuntu 18.04+: <i style="font-style:normal;font-weight:normal;color:#efaad6">&nbsp;apt install flameshot</i></span>
<span style="left:336.8px;top:338.7px;font-size:13.2px;color:#666;">•</span>
<span style="left:346.4px;top:338.7px;font-size:13.2px;color:#8a35ad;font-weight:bold;">Fedora: <i style="font-style:normal;font-weight:normal;color:#efaad6">&nbsp;dnf install flameshot</i></span>
<span style="left:336.8px;top:364.3px;font-size:13.2px;color:#666;">•</span>
<span style="left:346.4px;top:364.3px;font-size:13.2px;color:#8a35ad;font-weight:bold;">NixOS: <i style="font-style:normal;font-weight:normal;color:#efaad6">&nbsp;nix-env -iA nixos.flameshot  # Or from Nixpkgs</i></span>
<span style="left:336.8px;top:391.1px;font-size:13.2px;color:#666;">•</span>
<span style="left:346.4px;top:391.1px;font-size:13.2px;color:#8a35ad;font-weight:bold;">Guix: <i style="font-style:normal;font-weight:normal;color:#efaad6">&nbsp;guix install flameshot</i></span>
<span style="left:336.8px;top:417.5px;font-size:13.2px;color:#666;">•</span>
<span style="left:346.4px;top:417.5px;font-size:13.2px;color:#8a35ad;font-weight:bold;">openSUSE: <i style="font-style:normal;font-weight:normal;color:#efaad6">&nbsp;zypper install flameshot</i></span>
<span style="left:336.8px;top:444.3px;font-size:13.2px;color:#666;">•</span>
<span style="left:346.4px;top:444.3px;font-size:13.2px;color:#8a35ad;font-weight:bold;">Void Linux: <i style="font-style:normal;font-weight:normal;color:#efaad6">&nbsp;xbps-install flameshot</i></span>
<span style="left:336.8px;top:469.5px;font-size:13.2px;color:#666;">•</span>
<span style="left:346.4px;top:469.5px;font-size:13.2px;color:#8a35ad;font-weight:bold;">Solus: <i style="font-style:normal;font-weight:normal;color:#efaad6">&nbsp;eopkg it flameshot</i></span>
<span style="left:354.0px;top:268.2px;font-size:12.0px;color:#999;">◦ Snapshot also from AUR: git</span>
<span style="left:326.8px;top:496.0px;font-size:12.4px;color:#8a8a8a;">If you want a more recent version, or in case your distro</span>
<span style="left:326.8px;top:514.0px;font-size:12.4px;color:#8a8a8a;">does not have a package, choose from <i style="font-style:normal;color:#b0177a">here</i> to see</span>
<span style="left:326.8px;top:529.6px;font-size:12.4px;color:#c04b98;">instructions.</span>
<span style="left:326.8px;top:554.7px;font-size:13.2px;color:#444;font-weight:bold;">Install on Snap/Flatpak/AppImage</span>
</div></div>
<div id="pfoot"><svg class="ic" style="left:13.800px;top:14.400px;width:14.500px;height:12.500px" viewBox="0 0 15 13"><path d="M2.200 11.500A6 6 0 1 1 12.800 11.500z" fill="none" stroke="#333" stroke-width="1.300" stroke-linejoin="round"/><path d="M7 9l3-4" stroke="#333" stroke-width="1.300" stroke-linecap="round"/></svg><span><span id="pmem" style="letter-spacing:-0.319px">Memory usage:</span> 412 MB</span></div>
</div>
</body></html>
